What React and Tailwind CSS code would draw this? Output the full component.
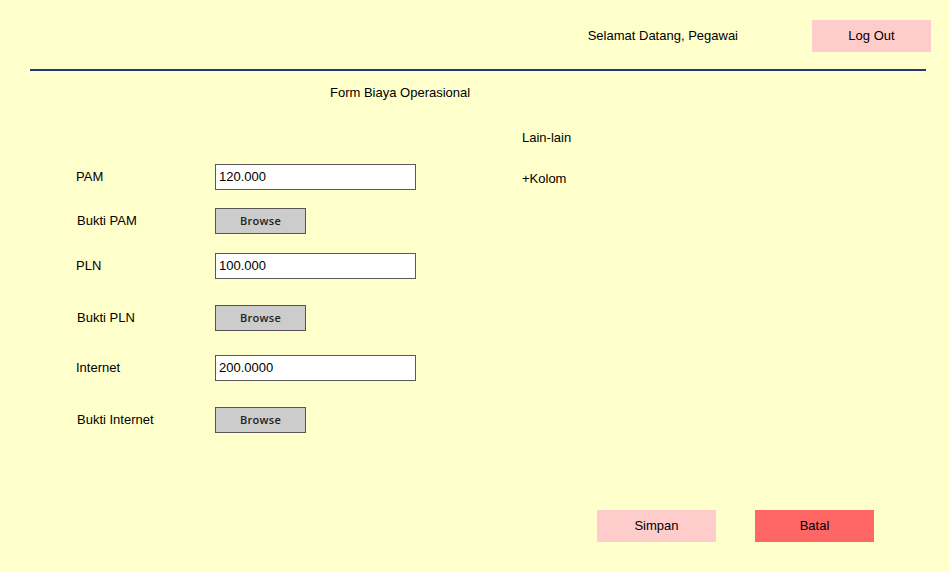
import React from 'react';

const font = { fontFamily: '"Liberation Sans", Arial, sans-serif' };

function TextField({ value }) {
  return (
    <div className="w-[201px] h-[26px] bg-white border-[1.5px] border-[#5a5a5a] flex items-center px-[3px] text-[13px] text-black">
      {value}
    </div>
  );
}

function BrowseButton() {
  return (
    <button
      className="w-[91px] h-[26px] bg-[#cccccc] border-[1.5px] border-[#555555] text-[11px] font-semibold text-[#222] flex items-center justify-center tracking-[0.3px]"
      style={{ fontFamily: '"Open Sans", "Liberation Sans", sans-serif' }}
    >
      Browse
    </button>
  );
}

function Row({ label, children, className = '' }) {
  return (
    <div className={`flex items-center ${className}`}>
      <div className="w-[139px] text-[13px] text-black">{label}</div>
      {children}
    </div>
  );
}

export default function App() {
  return (
    <div className="w-[949px] h-[572px] bg-[#ffffcc] overflow-hidden" style={font}>
      {/* header */}
      <div className="flex items-center justify-end pt-[20px] pr-[18px]">
        <span className="text-[13px] text-black mr-[74px]">Selamat Datang, Pegawai</span>
        <button className="w-[119px] h-[32px] bg-[#ffcccc] text-[13px] text-black">Log Out</button>
      </div>
      <div className="h-[2px] bg-[#1f3a7a] mt-[17px] ml-[30px] mr-[23px]" />

      <div className="pl-[330px] mt-[14px] text-[13px] leading-[16px] text-black">Form Biaya Operasional</div>

      <div className="flex">
        <div className="pl-[76px] w-[522px] pt-[63px] flex flex-col">
          <Row label="PAM"><TextField value="120.000" /></Row>
          <Row label={<span className="pl-[1px]">Bukti PAM</span>} className="mt-[18px]"><BrowseButton /></Row>
          <Row label="PLN" className="mt-[19px]"><TextField value="100.000" /></Row>
          <Row label={<span className="pl-[1px]">Bukti PLN</span>} className="mt-[26px]"><BrowseButton /></Row>
          <Row label="Internet" className="mt-[24px]"><TextField value="200.0000" /></Row>
          <Row label={<span className="pl-[1px]">Bukti Internet</span>} className="mt-[26px]"><BrowseButton /></Row>
        </div>
        <div className="flex flex-col text-[13px] text-black">
          <div className="mt-[29px] leading-[16px]">Lain-lain</div>
          <div className="mt-[25px] leading-[16px]">+Kolom</div>
        </div>
      </div>

      <div className="flex justify-end gap-[39px] pr-[75px] mt-[77px]">
        <button className="w-[119px] h-[32px] bg-[#ffcccc] text-[13px] text-black">Simpan</button>
        <button className="w-[119px] h-[32px] bg-[#ff6666] text-[13px] text-black">Batal</button>
      </div>
    </div>
  );
}
